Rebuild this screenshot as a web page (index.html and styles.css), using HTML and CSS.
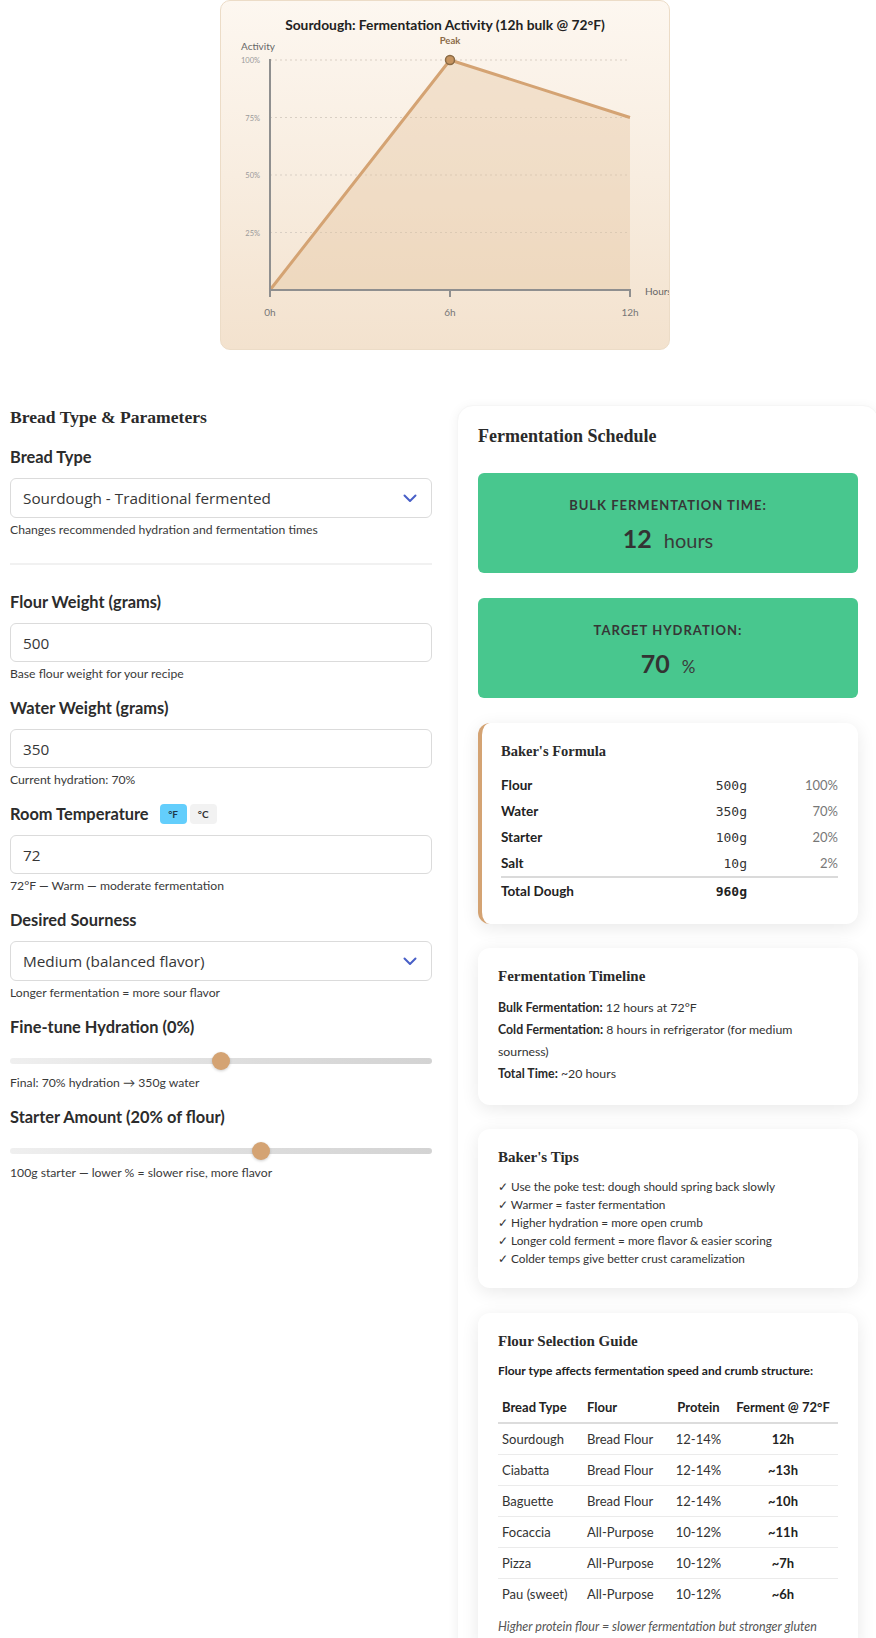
FILE: index.html
```html
<!DOCTYPE html>
<html lang="en">
<head>
<meta charset="utf-8">
<title>Sourdough Fermentation Calculator</title>
<link rel="stylesheet" href="styles.css">
</head>
<body>
<div class="page">
<div class="wrap">
  <div class="chart-box">
    <svg width="448" height="348" viewBox="1 1 448 348" xmlns="http://www.w3.org/2000/svg">
      <text class="c-title" x="225" y="29.5" text-anchor="middle">Sourdough: Fermentation Activity (12h bulk @ 72°F)</text>
      <text class="c-axis-title" x="21" y="49.5">Activity</text>
      <g class="c-grid">
        <line x1="50" y1="60" x2="410" y2="60"/>
        <line x1="50" y1="117.5" x2="410" y2="117.5"/>
        <line x1="50" y1="175" x2="410" y2="175"/>
        <line x1="50" y1="232.5" x2="410" y2="232.5"/>
      </g>
      <g class="c-ylab" text-anchor="end">
        <text x="40" y="63">100%</text>
        <text x="40" y="120.5">75%</text>
        <text x="40" y="178">50%</text>
        <text x="40" y="235.5">25%</text>
      </g>
      <polygon class="c-area" points="50,290 230,60 410,117.5 410,290"/>
      <polyline class="c-line" points="50,290 230,60 410,117.5"/>
      <g class="c-axis">
        <line x1="50" y1="59" x2="50" y2="291"/>
        <line x1="49" y1="290" x2="411" y2="290"/>
        <line x1="50" y1="290" x2="50" y2="297"/>
        <line x1="230" y1="290" x2="230" y2="297"/>
        <line x1="410" y1="290" x2="410" y2="297"/>
      </g>
      <circle class="c-peak" cx="230" cy="60" r="4.5"/>
      <text class="c-peak-lab" x="230" y="44" text-anchor="middle">Peak</text>
      <g class="c-xlab" text-anchor="middle">
        <text x="50" y="315.5">0h</text>
        <text x="230" y="315.5">6h</text>
        <text x="410" y="315.5">12h</text>
      </g>
      <text class="c-axis-title" x="425" y="294.5">Hours</text>
    </svg>
  </div>

  <div class="grid">
    <div class="col-left">
      <h2 class="section-title">Bread Type &amp; Parameters</h2>

      <div class="field">
        <div class="label">Bread Type</div>
        <div class="control select">
          <span>Sourdough - Traditional fermented</span>
          <svg class="chev" width="14" height="9" viewBox="0 0 14 9"><polyline points="1.5,1.5 7,7 12.5,1.5"/></svg>
        </div>
        <div class="help">Changes recommended hydration and fermentation times</div>
      </div>

      <div class="divider"></div>

      <div class="field">
        <div class="label">Flour Weight (grams)</div>
        <div class="control input">500</div>
        <div class="help">Base flour weight for your recipe</div>
      </div>

      <div class="field">
        <div class="label">Water Weight (grams)</div>
        <div class="control input">350</div>
        <div class="help">Current hydration: 70%</div>
      </div>

      <div class="field">
        <div class="label">Room Temperature
          <span class="toggles"><span class="tg on">°F</span><span class="tg">°C</span></span>
        </div>
        <div class="control input">72</div>
        <div class="help">72°F — Warm — moderate fermentation</div>
      </div>

      <div class="field">
        <div class="label">Desired Sourness</div>
        <div class="control select">
          <span>Medium (balanced flavor)</span>
          <svg class="chev" width="14" height="9" viewBox="0 0 14 9"><polyline points="1.5,1.5 7,7 12.5,1.5"/></svg>
        </div>
        <div class="help">Longer fermentation = more sour flavor</div>
      </div>

      <div class="field">
        <div class="label">Fine-tune Hydration (0%)</div>
        <input class="range" type="range" min="-10" max="10" value="0">
        <div class="help tight">Final: 70% hydration → 350g water</div>
      </div>

      <div class="field">
        <div class="label">Starter Amount (20% of flour)</div>
        <input class="range" type="range" min="5" max="30" value="20">
        <div class="help tight">100g starter — lower % = slower rise, more flavor</div>
      </div>
    </div>

    <div class="col-right">
      <h2 class="main-title">Fermentation Schedule</h2>

      <div class="stat">
        <div class="stat-label">Bulk Fermentation Time:</div>
        <div class="stat-value"><span class="num">12</span><span class="unit">hours</span></div>
      </div>

      <div class="stat">
        <div class="stat-label">Target Hydration:</div>
        <div class="stat-value"><span class="num">70</span><span class="unit small">%</span></div>
      </div>

      <div class="card formula">
        <h3 class="card-title">Baker's Formula</h3>
        <div class="f-row"><span class="f-name">Flour</span><span class="f-amt">500g</span><span class="f-pct">100%</span></div>
        <div class="f-row"><span class="f-name">Water</span><span class="f-amt">350g</span><span class="f-pct">70%</span></div>
        <div class="f-row"><span class="f-name">Starter</span><span class="f-amt">100g</span><span class="f-pct">20%</span></div>
        <div class="f-row"><span class="f-name">Salt</span><span class="f-amt">10g</span><span class="f-pct">2%</span></div>
        <div class="f-row total"><span class="f-name">Total Dough</span><span class="f-amt">960g</span><span class="f-pct"></span></div>
      </div>

      <div class="card">
        <h3 class="card-title">Fermentation Timeline</h3>
        <p class="tl"><strong>Bulk Fermentation:</strong> 12 hours at 72°F</p>
        <p class="tl"><strong>Cold Fermentation:</strong> 8 hours in refrigerator (for medium sourness)</p>
        <p class="tl"><strong>Total Time:</strong> ~20 hours</p>
      </div>

      <div class="card tips">
        <h3 class="card-title">Baker's Tips</h3>
        <ul class="tip-list">
          <li>✓ Use the poke test: dough should spring back slowly</li>
          <li>✓ Warmer = faster fermentation</li>
          <li>✓ Higher hydration = more open crumb</li>
          <li>✓ Longer cold ferment = more flavor &amp; easier scoring</li>
          <li>✓ Colder temps give better crust caramelization</li>
        </ul>
      </div>

      <div class="card">
        <h3 class="card-title">Flour Selection Guide</h3>
        <p class="guide-sub">Flour type affects fermentation speed and crumb structure:</p>
        <table class="guide">
          <thead>
            <tr><th class="c1">Bread Type</th><th class="c2">Flour</th><th class="c3">Protein</th><th class="c4">Ferment @ 72°F</th></tr>
          </thead>
          <tbody>
            <tr><td>Sourdough</td><td>Bread Flour</td><td class="ctr">12-14%</td><td class="ctr b">12h</td></tr>
            <tr><td>Ciabatta</td><td>Bread Flour</td><td class="ctr">12-14%</td><td class="ctr b">~13h</td></tr>
            <tr><td>Baguette</td><td>Bread Flour</td><td class="ctr">12-14%</td><td class="ctr b">~10h</td></tr>
            <tr><td>Focaccia</td><td>All-Purpose</td><td class="ctr">10-12%</td><td class="ctr b">~11h</td></tr>
            <tr><td>Pizza</td><td>All-Purpose</td><td class="ctr">10-12%</td><td class="ctr b">~7h</td></tr>
            <tr><td>Pau (sweet)</td><td>All-Purpose</td><td class="ctr">10-12%</td><td class="ctr b">~6h</td></tr>
          </tbody>
        </table>
        <p class="guide-note">Higher protein flour = slower fermentation but stronger gluten</p>
      </div>
    </div>
  </div>
</div>
</div>
</body>
</html>
```

FILE: styles.css
```css
* { box-sizing: border-box; }
html, body { margin: 0; padding: 0; overflow: hidden; background: #fff; }
body { font-family: Lato, "Open Sans", sans-serif; color: #333; }

.page { width: 876px; height: 1638px; overflow: hidden; }
.wrap { width: 889px; padding: 0 10px; }

/* chart */
.chart-box {
  width: 450px; height: 350px; margin: 0 auto;
  border: 1px solid #ecdcc7; border-radius: 10px; overflow: hidden;
  background: linear-gradient(180deg, #fdf7f0 0%, #f8ede0 50%, #f3e2ce 100%);
}
.chart-box svg { display: block; font-family: Lato, sans-serif; }
.c-title { font-size: 13.8px; font-weight: 700; fill: #222; }
.c-axis-title { font-size: 10px; fill: #666; }
.c-grid line { stroke: #d9cfc4; stroke-width: 1; stroke-dasharray: 2 3; }
.c-ylab text { font-size: 7.5px; fill: #9a9a9a; }
.c-area { fill: #e2bf98; fill-opacity: 0.35; }
.c-line { fill: none; stroke: #d4a373; stroke-width: 3; stroke-linejoin: round; }
.c-axis line { stroke: #8f8f8f; stroke-width: 2; }
.c-peak { fill: #c69460; stroke: #8a6a44; stroke-width: 1.5; }
.c-peak-lab { font-size: 9.5px; fill: #8a6a48; font-weight: 700; }
.c-xlab text { font-size: 10px; fill: #777; }

/* layout */
.grid {
  display: grid; grid-template-columns: 422px 422px; column-gap: 25px;
  margin-top: 55px; align-items: start;
}

/* left column */
.section-title {
  font-family: "Liberation Serif", serif; font-weight: 700; font-size: 17.6px;
  line-height: 24px; margin: 0 0 18px; color: #2a2a2a;
}
.field { margin-bottom: 16px; }
.label {
  display: flex; align-items: center; font-size: 16.4px; font-weight: 700;
  line-height: 20px; margin-bottom: 11px; color: #2c2c2c;
}
.control {
  height: 39px; border: 1px solid #dbdbdb; border-radius: 6px;
  display: flex; align-items: center; justify-content: space-between;
  padding: 0 14px 0 12px; font-family: "Open Sans", sans-serif; font-size: 15.3px; color: #363636;
  background: #fff;
}
.control.select { height: 40px; }
.chev polyline { fill: none; stroke: #485fc7; stroke-width: 2; stroke-linecap: round; stroke-linejoin: round; }
.help { font-size: 12.2px; line-height: 16px; margin-top: 4px; color: #3a3a3a; }
.help.tight { margin-top: 1px; }
.divider { height: 2px; background: #f1f1f1; margin: 25px 0 27px; }

.toggles { display: inline-flex; gap: 3px; margin-left: 11px; }
.tg {
  width: 27px; height: 20px; border-radius: 4px; background: #f2f2f2;
  font-size: 10px; font-weight: 700; color: #333; display: flex; align-items: center; justify-content: center;
}
.tg.on { background: #63cefc; color: #1f3a4a; }

.range {
  -webkit-appearance: none; appearance: none; display: block; width: 100%;
  height: 26px; margin: 0; background: transparent;
}
.range::-webkit-slider-runnable-track {
  height: 6px; border-radius: 3px;
  background: linear-gradient(90deg, #efefef 0%, #dcdcdc 60%, #d3d3d3 100%);
}
.range::-webkit-slider-thumb {
  -webkit-appearance: none; appearance: none; width: 18px; height: 18px; border-radius: 50%;
  background: #d4a373; margin-top: -6px; box-shadow: 0 1px 3px rgba(0,0,0,0.2); border: none;
}

/* right column */
.col-right {
  background: #fff; border-radius: 16px; padding: 20px;
  box-shadow: 0 2px 12px rgba(0,0,0,0.06); border: 1px solid #f6f6f6;
}
.main-title {
  font-family: "Liberation Serif", serif; font-weight: 700; font-size: 18px;
  line-height: 22px; margin: -1px 0 26px; color: #2a2a2a;
}
.stat {
  height: 100px; background: #48c78e; border-radius: 6px; text-align: center;
  padding: 22px 20px 0; margin-bottom: 25px; color: #363636;
}
.stat-label {
  font-size: 13px; font-weight: 700; text-transform: uppercase; letter-spacing: 1px;
  line-height: 20px; color: #363636;
}
.stat-value { margin-top: 8px; line-height: 30px; }
.stat-value .num { font-size: 25px; font-weight: 700; color: #333; }
.stat-value .unit { font-size: 20px; margin-left: 12px; color: #3a3a3a; }
.stat-value .unit.small { font-size: 17px; }

.card {
  background: #fff; border-radius: 12px; padding: 20px;
  box-shadow: 0 4px 18px rgba(0,0,0,0.09); margin-bottom: 24px;
}
.card.tips { margin-bottom: 25px; }
.card-title {
  font-family: "Liberation Serif", serif; font-weight: 700; font-size: 15px;
  line-height: 16px; margin: 0 0 13px; color: #2a2a2a;
}
.formula { border-left: 4px solid #d4a373; padding-left: 19px; }
.formula .card-title { font-size: 14.5px; }
.f-row {
  display: grid; grid-template-columns: 1fr 90px 91px; height: 26px; align-items: center;
}
.f-name { font-size: 13.5px; font-weight: 700; color: #222; }
.f-amt { font-family: "DejaVu Sans Mono", monospace; font-size: 13px; text-align: right; color: #333; }
.f-pct { font-size: 13px; text-align: right; color: #777; }
.f-row.total { border-top: 2px solid #dadada; height: 28px; }
.f-row.total .f-amt { font-weight: 700; color: #222; }

.tl { margin: 0; font-size: 12.3px; line-height: 22px; color: #333; }
.tl strong { color: #2a2a2a; }

.tip-list { list-style: none; margin: 0; padding: 0; }
.tip-list li { font-size: 11.8px; line-height: 18px; color: #333; }

.guide-sub { margin: 14px 0 13px; font-size: 12px; font-weight: 700; line-height: 16px; color: #222; }
.guide { width: 100%; border-collapse: separate; border-spacing: 0; font-size: 13px; color: #333; }
.guide th {
  font-weight: 700; text-align: left; line-height: 30px; padding: 0 4px;
  border-bottom: 2px solid #dcdcdc; color: #222; white-space: nowrap;
}
.guide td { line-height: 30px; padding: 0 4px; border-bottom: 1px solid #ebebeb; white-space: nowrap; }
.guide tbody tr:last-child td { border-bottom: none; }
.guide .c1 { width: 85px; }
.guide .c2 { width: 86px; }
.guide .c3 { width: 59px; text-align: center; }
.guide .c4 { text-align: center; }
.guide .ctr { text-align: center; }
.guide .b { font-weight: 700; color: #222; }
.guide-note { margin: 10px 0 0; font-size: 12.5px; font-style: italic; line-height: 16px; color: #555; }
```
